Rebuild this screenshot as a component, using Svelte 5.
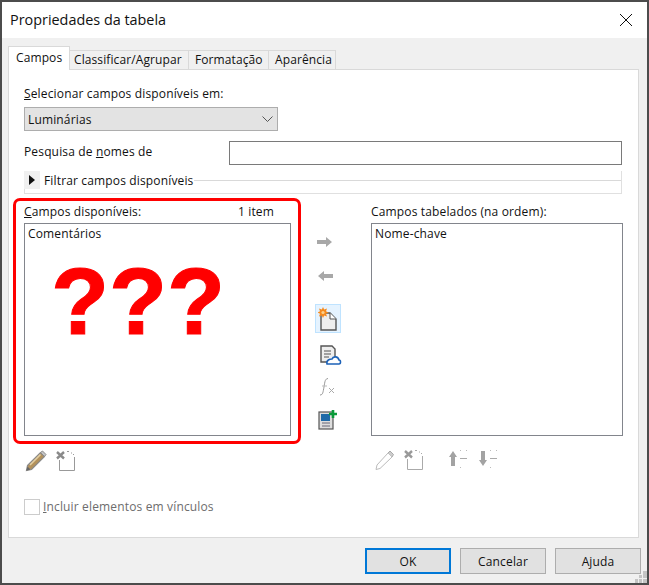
<script>
    const tabs = ['Campos', 'Classificar/Agrupar', 'Formatação', 'Aparência'];
</script>

<div class="dialog">
    <header class="titlebar">
        <span class="title">Propriedades da tabela</span>
        <svg class="close" width="14" height="14" viewBox="0 0 14 14"><path d="M1 1L13 13M13 1L1 13" stroke="#111" stroke-width="1" fill="none"/></svg>
    </header>

    <div class="body">
        <div class="tabs">
            {#each tabs as tab, i}
                <div class="tab" class:active={i === 0}>{tab}</div>
            {/each}
        </div>

        <div class="panel">
            <div class="label first"><u>S</u>elecionar campos disponíveis em:</div>
            <div class="select">
                <span>Luminárias</span>
                <svg width="11" height="6" viewBox="0 0 11 6"><path d="M0.5 0.5L5.5 5.5L10.5 0.5" stroke="#555" fill="none"/></svg>
            </div>

            <div class="search">
                <span class="search-label">Pesquisa de <u>n</u>omes de</span>
                <div class="input"></div>
            </div>

            <div class="filter">
                <div class="filter-head">
                    <span class="expander"><svg width="6" height="10" viewBox="0 0 6 10"><path d="M0 0L6 5L0 10Z" fill="#111"/></svg></span>
                    <span class="filter-text">Filtrar campos disponíveis</span>
                    <span class="filter-line"></span>
                </div>
            </div>

            <div class="columns">
                <div class="col-left">
                    <div class="col-head">
                        <span><u>C</u>ampos disponíveis:</span>
                        <span>1 item</span>
                    </div>
                    <div class="list">
                        Comentários
                        <span class="marks">???</span>
                    </div>
                    <div class="tools tools-left">
                        <svg width="22" height="22" viewBox="0 0 22 22">
                            <path d="M2.5 15.5L15.5 2.5L19.5 6.5L6.5 19.5L1.5 20.5Z" fill="#b3925c" stroke="#8a8a8a" stroke-width="1.2"/>
                            <path d="M5 15L15.5 4.5" stroke="#e3cfa3" stroke-width="1.6"/>
                            <path d="M15.5 2.5L17.5 1L21 4.5L19.5 6.5Z" fill="#c4c4c4" stroke="#8a8a8a"/>
                            <path d="M1.5 20.5L2.5 16.5L5.5 19.5Z" fill="#666"/>
                        </svg>
                        <svg width="20" height="20" viewBox="0 0 20 20">
                            <path d="M3.5 9V19.5H18.5V6" stroke="#999" fill="none"/>
                            <path d="M11 0.5H13M15 2H16M17 3.5H18" stroke="#999"/>
                            <path d="M1 1L8 7.5M8 1L1 7.5" stroke="#8a8a8a" stroke-width="2.4"/>
                        </svg>
                    </div>
                </div>

                <div class="col-mid">
                    <svg class="m-a" width="16" height="10" viewBox="0 0 16 10"><path d="M0 3H9V0L15 5L9 10V7H0Z" fill="#a8a8a8"/></svg>
                    <svg class="m-b" width="16" height="10" viewBox="0 0 16 10"><path d="M16 3H7V0L1 5L7 10V7H16Z" fill="#a8a8a8"/></svg>
                    <div class="m-new">
                        <svg width="20" height="24" viewBox="0 0 20 24">
                            <path d="M3 6H12L18 12V23H3Z" fill="#eee" stroke="#555" stroke-width="1.4"/>
                            <path d="M12 6V12H18" fill="#fff" stroke="#555"/>
                            <path d="M5 0L6.2 2.5L9 1.5L8 4.3L10.5 5.5L8 6.7L9 9.5L6.2 8.5L5 11L3.8 8.5L1 9.5L2 6.7L-0.5 5.5L2 4.3L1 1.5L3.8 2.5Z" fill="#f58a1f"/>
                            <circle cx="5" cy="5.5" r="1.6" fill="#fdd08a"/>
                        </svg>
                    </div>
                    <svg class="m-doc" width="22" height="20" viewBox="0 0 22 20">
                        <path d="M1 1H12L15 4V17H1Z" fill="#eee" stroke="#555" stroke-width="1.4"/>
                        <path d="M4 6H11M4 9H11M4 12H9" stroke="#555"/>
                        <path d="M7 19C6 15 10 14 12 14C13 11 18 11 19 15C21 15 21 19 19 19Z" fill="#fff" stroke="#1c62b8" stroke-width="1.6"/>
                    </svg>
                    <svg class="m-fx" width="18" height="18" viewBox="0 0 18 18">
                        <path d="M1 17C4 17 4 14 5 9C6 3 6 1 9 0.5" stroke="#999" fill="none"/>
                        <path d="M3 8H8" stroke="#bbb"/>
                        <path d="M10 10L15 15M15 10L10 15" stroke="#aaa"/>
                    </svg>
                    <svg class="m-add" width="20" height="20" viewBox="0 0 20 20">
                        <rect x="1" y="2" width="14" height="17" fill="#ddd" stroke="#555" stroke-width="1.2"/>
                        <rect x="3" y="4" width="9" height="7" fill="#1f6aa8"/>
                        <path d="M4 13H12M4 16H12" stroke="#667"/>
                        <path d="M15 0V8M11 4H19" stroke="#0b9a3a" stroke-width="2.6"/>
                    </svg>
                </div>

                <div class="col-right">
                    <div class="col-head"><span>Campos tabelados (na ordem):</span></div>
                    <div class="list">Nome-chave</div>
                    <div class="tools tools-right">
                        <svg width="20" height="20" viewBox="0 0 20 20">
                            <path d="M2 15L13 3L17 7L5 18.5L1 19.5Z" fill="none" stroke="#bbb"/>
                            <path d="M13 3L15 1L18.5 4.5L17 7" fill="#ccc" stroke="#aaa"/>
                        </svg>
                        <svg width="20" height="20" viewBox="0 0 20 20">
                            <path d="M3.5 9V19.5H18.5V6" stroke="#aaa" fill="none"/>
                            <path d="M11 0.5H13M15 2H16M17 3.5H18" stroke="#aaa"/>
                            <path d="M1 1L8 7.5M8 1L1 7.5" stroke="#999" stroke-width="2.4"/>
                        </svg>
                        <svg class="gap" width="20" height="20" viewBox="0 0 20 20">
                            <path d="M5 1L9 7H7V16H3V7H1Z" fill="#a3a3a3"/>
                            <path d="M12 8.5H19" stroke="#aaa"/>
                            <path d="M12 0.5H13M12 17.5H13M18 0.5H19" stroke="#bbb"/>
                        </svg>
                        <svg class="gap2" width="20" height="20" viewBox="0 0 20 20">
                            <path d="M5 16L9 10H7V1H3V10H1Z" fill="#a3a3a3"/>
                            <path d="M12 8.5H19" stroke="#aaa"/>
                            <path d="M12 0.5H13M12 17.5H13M18 0.5H19" stroke="#bbb"/>
                        </svg>
                    </div>
                </div>
            </div>

            <div class="check">
                <span class="box"></span>
                <span><u>I</u>ncluir elementos em vínculos</span>
            </div>
        </div>

        <div class="buttons">
            <div class="btn default">OK</div>
            <div class="btn">Cancelar</div>
            <div class="btn">Ajuda</div>
        </div>
        <svg class="grip" width="12" height="12" viewBox="0 0 12 12"><path d="M8 0h4v4H8zM4 4h3v3H4zM8 4h4v3H8zM0 8h3v4H0zM4 8h3v4H4zM8 8h4v4H8z" fill="#c4c4c4"/></svg>
    </div>
</div>

<style>
    :global(body) {
        margin: 0;
        font-family: "Open Sans", "Noto Sans", sans-serif;
        font-size: 12px;
        letter-spacing: 0.15px;
        color: #111;
    }

    .dialog {
        width: 649px;
        height: 585px;
        box-sizing: border-box;
        border: 2px solid #4c4c4c;
        background: #f0f0f0;
        display: flex;
        flex-direction: column;
    }

    .titlebar {
        height: 36px;
        background: #fff;
        display: flex;
        align-items: center;
        justify-content: space-between;
        padding: 0 14px 0 8px;
        flex: none;
    }

    .title {
        font-size: 14.4px;
        letter-spacing: 0;
        margin-bottom: 2px;
    }

    .body {
        flex: 1;
        position: relative;
        padding: 8px 8px 0 6px;
    }

    .tabs {
        display: flex;
        align-items: flex-end;
        height: 23px;
    }

    .tab {
        height: 19px;
        line-height: 18px;
        padding: 0 0 0 6px;
        background: #f0f0f0;
        border: 1px solid #d9d9d9;
        border-bottom: none;
        border-left: none;
        white-space: nowrap;
        box-sizing: border-box;
        letter-spacing: 0.1px;
    }

    .tab.active {
        height: 24px;
        line-height: 22px;
        width: 62px;
        padding: 0 0 0 7px;
        background: #fff;
        border: 1px solid #d9d9d9;
        border-bottom: none;
        margin-bottom: -1px;
        position: relative;
        z-index: 1;
    }

    .tab:nth-child(2) { width: 119px; padding-left: 4px; }
    .tab:nth-child(3) { width: 80px; }
    .tab:nth-child(4) { width: 67px; }

    .panel {
        width: 631px;
        height: 469px;
        box-sizing: border-box;
        background: #fff;
        border: 1px solid #d9d9d9;
        padding: 15px 16px 0 15px;
    }

    .label.first {
        height: 18px;
        line-height: 18px;
    }

    .select {
        width: 254px;
        height: 24px;
        box-sizing: border-box;
        margin-top: 4px;
        background: #e3e3e3;
        border: 1px solid #adadad;
        display: flex;
        align-items: center;
        justify-content: space-between;
        padding: 0 4px 0 3px;
    }

    .search {
        display: flex;
        justify-content: space-between;
        align-items: center;
        margin-top: 10px;
    }

    .search-label {
        margin-top: -3px;
    }

    .input {
        width: 393px;
        height: 24px;
        box-sizing: border-box;
        border: 1px solid #7a7a7a;
        background: #fff;
    }

    .filter {
        margin-top: 6px;
        width: 598px;
        height: 23px;
        box-sizing: border-box;
        border-left: 1px solid #e0e0e0;
        border-right: 1px solid #e0e0e0;
        border-bottom: 1px solid #e0e0e0;
    }

    .filter-head {
        display: flex;
        align-items: center;
        height: 18px;
    }

    .expander {
        width: 16px;
        height: 18px;
        background: #f0f0f0;
        display: flex;
        align-items: center;
        justify-content: center;
        margin-left: -1px;
        flex: none;
    }

    .filter-text {
        margin-left: 4px;
        white-space: nowrap;
    }

    .filter-line {
        flex: 1;
        height: 1px;
        background: #d9d9d9;
        margin-left: 1px;
    }

    .columns {
        display: flex;
        margin-top: 4px;
    }

    .col-left {
        width: 288px;
        height: 246px;
        flex: none;
        box-sizing: border-box;
        margin-left: -11px;
        border: 3px solid #f00;
        border-radius: 7px;
        padding: 2px 7px 0 8px;
        position: relative;
    }

    .col-head {
        height: 20px;
        line-height: 17px;
        display: flex;
        justify-content: space-between;
        padding-right: 17px;
    }

    .list {
        box-sizing: border-box;
        height: 213px;
        border: 1px solid #82858c;
        padding: 1px 3px;
        line-height: 18px;
        position: relative;
        background: #fff;
    }

    .marks {
        position: absolute;
        left: 26px;
        top: 18px;
        font-family: "Liberation Sans", sans-serif;
        font-size: 95px;
        line-height: 118px;
        font-weight: 700;
        color: #f00;
        letter-spacing: 0;
        -webkit-text-stroke: 1px #f00;
    }

    .tools {
        display: flex;
        align-items: center;
        position: absolute;
    }

    .tools-left {
        top: 249px;
        left: 9px;
        gap: 9px;
    }

    .tools-right {
        top: 252px;
        left: 4px;
        gap: 9px;
    }

    .tools-right .gap {
        margin-left: 15px;
    }

    .tools-right .gap2 {
        margin-left: 1px;
    }

    .col-mid {
        width: 54px;
        height: 246px;
        flex: none;
        display: flex;
        flex-direction: column;
        align-items: center;
        padding-top: 39px;
        box-sizing: border-box;
    }

    .m-a, .m-b { flex: none; margin-right: 6px; }
    .m-b { margin-top: 24px; }

    .m-new {
        margin-top: 23px;
        width: 26px;
        height: 29px;
        box-sizing: border-box;
        border: 1px solid #bfe3ff;
        background: #e5f3ff;
        display: flex;
        align-items: center;
        justify-content: center;
        flex: none;
    }

    .m-doc { margin-top: 12px; margin-left: 6px; flex: none; }
    .m-fx { margin-top: 13px; flex: none; }
    .m-add { margin-top: 14px; flex: none; }

    .col-right {
        width: 252px;
        flex: none;
        padding-top: 5px;
        position: relative;
        margin-left: 16px;
    }

    .col-right .col-head {
        padding: 0;
    }

    .check {
        display: flex;
        align-items: center;
        gap: 3px;
        color: #6d6d6d;
        margin-top: 54px;
    }

    .box {
        width: 16px;
        height: 16px;
        box-sizing: border-box;
        border: 1px solid #ccc;
        background: #fff;
        flex: none;
    }

    .buttons {
        display: flex;
        justify-content: flex-end;
        gap: 9px;
        margin-top: 10px;
        width: 633px;
    }

    .btn {
        width: 86px;
        height: 26px;
        box-sizing: border-box;
        background: #e1e1e1;
        border: 1px solid #adadad;
        display: flex;
        align-items: center;
        justify-content: center;
    }

    .btn.default {
        border: 2px solid #0078d7;
    }

    .grip {
        position: absolute;
        right: 0;
        bottom: 0;
    }
</style>
